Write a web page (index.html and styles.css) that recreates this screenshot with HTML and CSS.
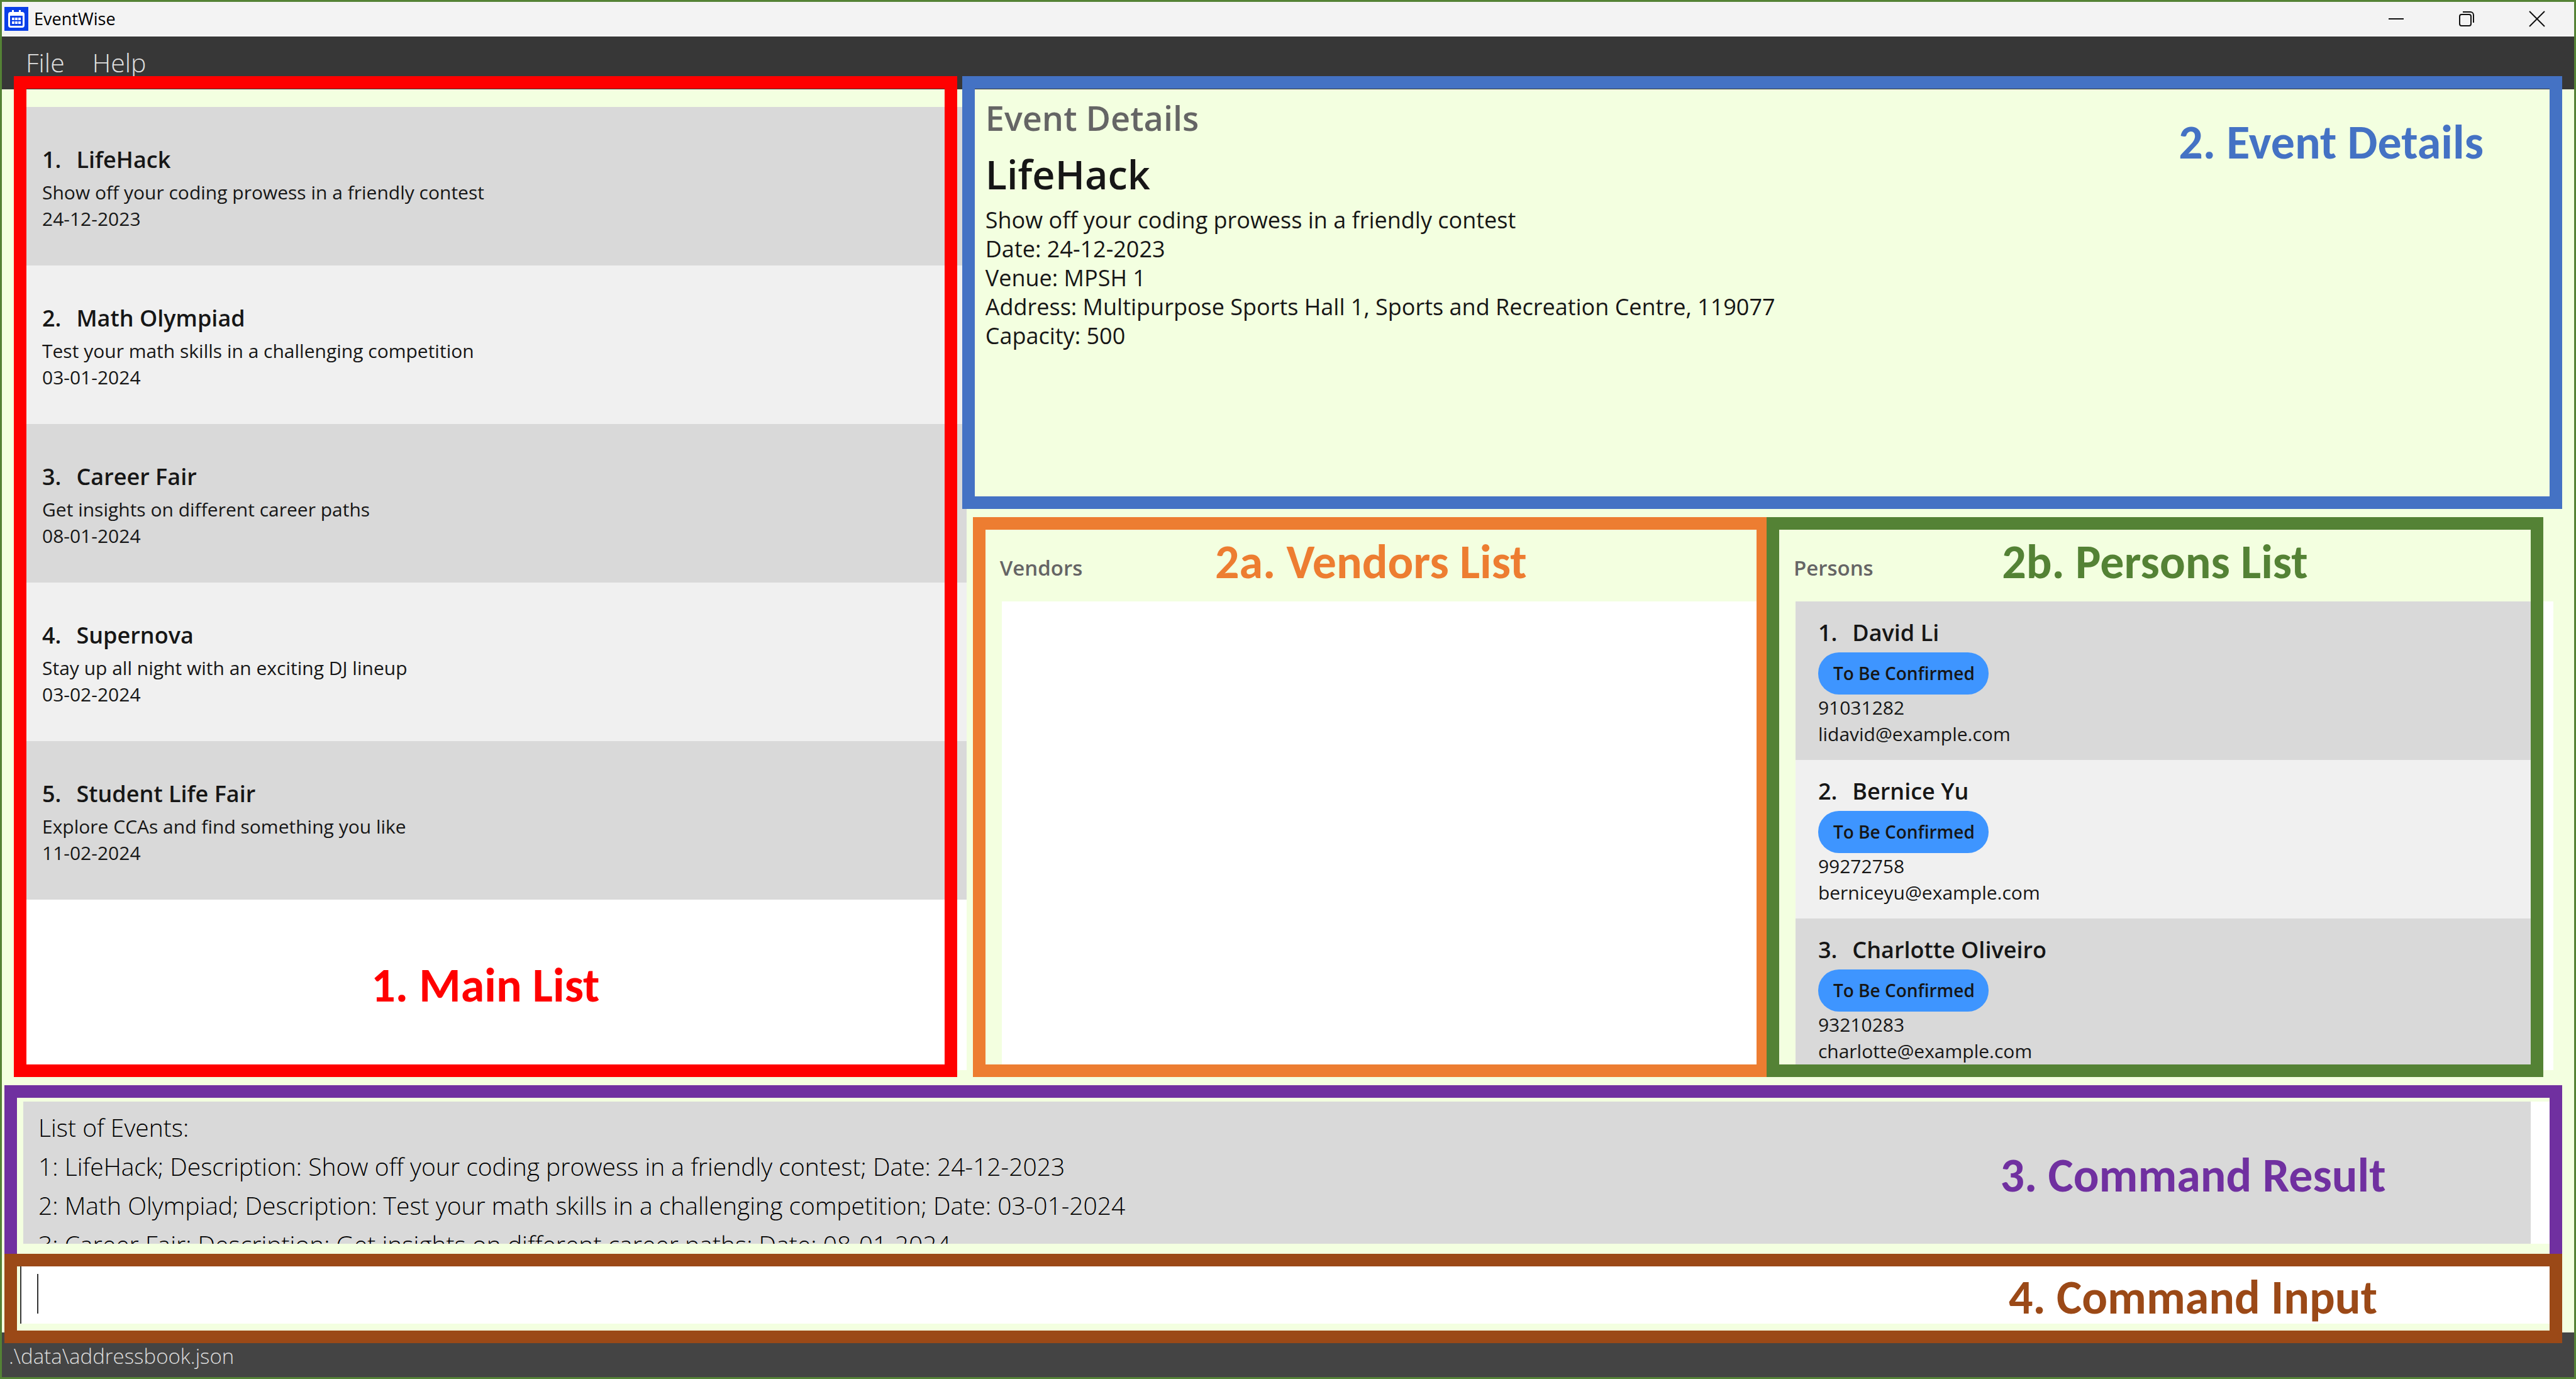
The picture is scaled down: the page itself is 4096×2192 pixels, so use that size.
FILE: index.html
```html
<!DOCTYPE html>
<html lang="en">
<head>
<meta charset="utf-8">
<title>EventWise</title>
<link rel="stylesheet" href="styles.css">
</head>
<body>
<div class="window">
  <header class="titlebar">
    <svg class="app-icon" viewBox="0 0 38 38" aria-hidden="true">
      <rect width="38" height="38" fill="#0a3fe8"/>
      <path fill="#fff" d="M12 5h3v3h8V5h3v3h2a4 4 0 0 1 4 4v17a4 4 0 0 1-4 4H10a4 4 0 0 1-4-4V12a4 4 0 0 1 4-4h2z"/>
      <path fill="#0a3fe8" d="M9 14h20v15a1 1 0 0 1-1 1H10a1 1 0 0 1-1-1z"/>
      <path fill="#fff" d="M12 17h4v4h-4zM17 17h4v4h-4zM22 17h4v4h-4zM12 23h4v4h-4zM17 23h4v4h-4zM22 23h4v4h-4z"/>
    </svg>
    <span class="app-name">EventWise</span>
    <div class="window-buttons">
      <button class="window-button" type="button" aria-label="Minimize">
        <svg viewBox="0 0 24 24"><path d="M0 12h24"/></svg>
      </button>
      <button class="window-button" type="button" aria-label="Restore">
        <svg viewBox="0 0 24 24"><rect x="1" y="5" width="18" height="18" rx="3"/><path d="M6 1h12a5 5 0 0 1 5 5v12"/></svg>
      </button>
      <button class="window-button" type="button" aria-label="Close">
        <svg viewBox="0 0 24 24"><path d="M0 0l24 24M24 0L0 24"/></svg>
      </button>
    </div>
  </header>

  <nav class="menubar">
    <button class="menu" type="button">File</button>
    <button class="menu" type="button">Help</button>
  </nav>

  <main class="workspace">
    <section class="events">
      <ol class="list event-list">
        <li class="event">
          <h2 class="item-name"><span>1.</span><span>LifeHack</span></h2>
          <p class="item-line">Show off your coding prowess in a friendly contest</p>
          <p class="item-line">24-12-2023</p>
        </li>
        <li class="event">
          <h2 class="item-name"><span>2.</span><span>Math Olympiad</span></h2>
          <p class="item-line">Test your math skills in a challenging competition</p>
          <p class="item-line">03-01-2024</p>
        </li>
        <li class="event">
          <h2 class="item-name"><span>3.</span><span>Career Fair</span></h2>
          <p class="item-line">Get insights on different career paths</p>
          <p class="item-line">08-01-2024</p>
        </li>
        <li class="event">
          <h2 class="item-name"><span>4.</span><span>Supernova</span></h2>
          <p class="item-line">Stay up all night with an exciting DJ lineup</p>
          <p class="item-line">03-02-2024</p>
        </li>
        <li class="event">
          <h2 class="item-name"><span>5.</span><span>Student Life Fair</span></h2>
          <p class="item-line">Explore CCAs and find something you like</p>
          <p class="item-line">11-02-2024</p>
        </li>
      </ol>
      <div class="frame frame-events"><span class="callout">1. Main List</span></div>
    </section>

    <div class="event-side">
      <section class="details">
        <h1 class="details-heading">Event Details</h1>
        <h2 class="details-name">LifeHack</h2>
        <p class="details-line">Show off your coding prowess in a friendly contest</p>
        <p class="details-line">Date: 24-12-2023</p>
        <p class="details-line">Venue: MPSH 1</p>
        <p class="details-line">Address: Multipurpose Sports Hall 1, Sports and Recreation Centre, 119077</p>
        <p class="details-line">Capacity: 500</p>
        <div class="frame frame-details"><span class="callout">2. Event Details</span></div>
      </section>

      <div class="sublists">
        <section class="sublist">
          <h2 class="sublist-heading">Vendors</h2>
          <ol class="list"></ol>
          <div class="frame frame-vendors"><span class="callout">2a. Vendors List</span></div>
        </section>
        <section class="sublist">
          <h2 class="sublist-heading">Persons</h2>
          <ol class="list person-list">
            <li class="person">
              <h3 class="item-name"><span>1.</span><span>David Li</span></h3>
              <span class="status-pill">To Be Confirmed</span>
              <p class="item-line">91031282</p>
              <p class="item-line">lidavid@example.com</p>
            </li>
            <li class="person">
              <h3 class="item-name"><span>2.</span><span>Bernice Yu</span></h3>
              <span class="status-pill">To Be Confirmed</span>
              <p class="item-line">99272758</p>
              <p class="item-line">berniceyu@example.com</p>
            </li>
            <li class="person">
              <h3 class="item-name"><span>3.</span><span>Charlotte Oliveiro</span></h3>
              <span class="status-pill">To Be Confirmed</span>
              <p class="item-line">93210283</p>
              <p class="item-line">charlotte@example.com</p>
            </li>
          </ol>
          <div class="frame frame-persons"><span class="callout">2b. Persons List</span></div>
        </section>
      </div>
    </div>
  </main>

  <section class="result">
    <div class="result-box">
      <textarea class="result-text" readonly aria-label="Command result">List of Events:
1: LifeHack; Description: Show off your coding prowess in a friendly contest; Date: 24-12-2023
2: Math Olympiad; Description: Test your math skills in a challenging competition; Date: 03-01-2024
3: Career Fair; Description: Get insights on different career paths; Date: 08-01-2024</textarea>
    </div>
    <div class="frame frame-result"><span class="callout">3. Command Result</span></div>
  </section>

  <section class="command">
    <input class="command-input" type="text" aria-label="Command input">
    <span class="caret"></span>
    <div class="frame frame-command"><span class="callout">4. Command Input</span></div>
  </section>

  <footer class="statusbar">.\data\addressbook.json</footer>
</div>
</body>
</html>
```
FILE: styles.css
```css
* {
  box-sizing: border-box;
}

body {
  margin: 0;
  color: #161616;
  font-family: "Segoe UI", "Open Sans", "Noto Sans", sans-serif;
  font-variant-ligatures: none;
}

h1, h2, h3, p, ol {
  margin: 0;
  padding: 0;
}

ol {
  list-style: none;
}

button {
  margin: 0;
  padding: 0;
  border: 0;
  background: none;
  color: inherit;
  font: inherit;
}

.window {
  display: flex;
  flex-direction: column;
  min-height: 100vh;
  border: 3px solid #548235;
  background: #f3ffe0;
}

/* Title bar */

.titlebar {
  display: flex;
  align-items: center;
  height: 55px;
  padding: 0 3px 0 4px;
  border-bottom: 2px solid #fdfdfd;
  background: #f3f3f3;
  color: #000;
}

.app-icon {
  width: 38px;
  height: 38px;
}

.app-name {
  margin-left: 9px;
  font-size: 27px;
}

.window-buttons {
  display: flex;
  height: 100%;
  margin-left: auto;
}

.window-button {
  display: grid;
  place-items: center;
  width: 112px;
}

.window-button svg {
  width: 24px;
  height: 24px;
  overflow: visible;
  fill: none;
  stroke: #111;
  stroke-width: 2;
}

/* Menu bar */

.menubar {
  display: flex;
  height: 84px;
  padding-left: 16px;
  background: #373737;
}

.menu {
  align-self: flex-start;
  padding: 0 22px;
  color: #e0e0e0;
  font-size: 41px;
  font-weight: 300;
  line-height: 82px;
}

/* Workspace */

.workspace {
  display: grid;
  flex: 1;
  grid-template-columns: 3fr 5fr;
}

.events {
  position: relative;
  display: flex;
  padding: 28px 0 11px 29px;
}

.list {
  flex: 1;
  overflow: hidden;
  background: #fff;
}

.event,
.person {
  height: 252px;
  background: #d9d9d9;
}

.event:nth-child(even),
.person:nth-child(even) {
  background: #f0f0f0;
}

.event {
  padding: 59px 35px 0;
}

.person {
  padding: 25px 36px 0;
}

.item-name {
  display: flex;
  gap: 24px;
  font-size: 36px;
  font-weight: 600;
  line-height: 50px;
}

.event .item-name {
  margin-bottom: 6px;
}

.item-line {
  font-size: 30px;
  line-height: 42px;
}

.event-side {
  display: grid;
  grid-template-rows: 3fr 4fr;
  gap: 13px;
}

.details {
  position: relative;
  padding: 5px 30px;
}

.details-heading {
  margin-bottom: 5px;
  color: #656565;
  font-size: 54px;
  font-weight: 600;
  line-height: 80px;
}

.details-name {
  margin-bottom: 5px;
  font-size: 63px;
  font-weight: 600;
  line-height: 90px;
}

.details-line {
  font-size: 36px;
  line-height: 46px;
}

.sublists {
  display: grid;
  grid-template-columns: 1fr 1fr;
  min-height: 0;
  padding: 0 22px 0 10px;
}

.sublist {
  position: relative;
  display: flex;
  flex-direction: column;
  min-height: 0;
  padding: 56px 11px 11px 43px;
}

.sublist-heading {
  margin-bottom: 28px;
  color: #656565;
  font-size: 33px;
  font-weight: 600;
  line-height: 50px;
}

.sublist .list {
  min-height: 0;
  margin-left: 3px;
  flex-basis: 0;
}

.person-list {
  padding-right: 36px;
}

.status-pill {
  display: block;
  width: max-content;
  margin-top: 6px;
  padding: 0 22px 0 24px;
  border-radius: 33px;
  background: #3e95ff;
  font-size: 28px;
  font-weight: 600;
  line-height: 67px;
}

/* Command result */

.result {
  position: relative;
  margin: 13px 19px 0 4px;
  padding: 26px 14px 16px 30px;
}

.result-box {
  padding-right: 36px;
  background: #fff;
}

.result-text {
  display: block;
  width: 100%;
  height: 226px;
  padding: 10px 24px 0;
  border: 0;
  outline: 0;
  overflow: hidden;
  resize: none;
  background: #d9d9d9;
  color: #000;
  font-family: inherit;
  font-size: 39px;
  font-weight: 300;
  line-height: 62px;
}

/* Command input */

.command {
  position: relative;
  z-index: 1;
  height: 142px;
  margin: 0 19px 0 4px;
  padding: 3px 14px 31px 25px;
}

.command-input {
  display: block;
  width: 100%;
  height: 108px;
  padding: 0 26px;
  border: 0;
  border-left: 2px solid #383838;
  outline: 0;
  background: #fff;
  font-family: inherit;
  font-size: 39px;
  font-weight: 300;
}

.caret {
  position: absolute;
  top: 32px;
  left: 52px;
  width: 2px;
  height: 63px;
  background: #333;
}

/* Status bar */

.statusbar {
  height: 71px;
  margin-top: -17px;
  padding: 4px 11px 0;
  background: #444;
  color: #dcdcdc;
  font-size: 33px;
  font-weight: 300;
  line-height: 67px;
}

/* Callout frames laid over the panels */

.frame {
  position: absolute;
  inset: 0;
  z-index: 2;
  border: 20px solid;
  pointer-events: none;
}

.callout {
  position: absolute;
  font-family: Calibri, Carlito, Lato, sans-serif;
  font-size: 76px;
  font-weight: 700;
  line-height: 80px;
  white-space: nowrap;
}

.frame-events {
  inset: -21px 15px 0 19px;
  border-color: #f00;
  color: #f00;
}

.frame-events .callout {
  right: 0;
  bottom: 86px;
  left: 0;
  text-align: center;
}

.frame-details {
  inset: -21px 19px 0 -7px;
  border-color: #4472c4;
  color: #4472c4;
}

.frame-details .callout {
  top: 45px;
  right: 105px;
}

.frame-vendors {
  right: -4px;
  border-color: #ed7d31;
  color: #ed7d31;
}

.frame-persons {
  right: 27px;
  border-color: #548235;
  color: #548235;
}

.frame-vendors .callout,
.frame-persons .callout {
  top: 11px;
  right: 0;
  left: 0;
  text-align: center;
}

.frame-result {
  border-bottom: 0;
  border-color: #7030a0;
  color: #7030a0;
}

.frame-command {
  border-color: #9b4917;
  color: #9b4917;
}

.frame-result .callout,
.frame-command .callout {
  right: 240px;
  width: 654px;
  text-align: center;
}

.frame-result .callout {
  top: 83px;
}

.frame-command .callout {
  top: 9px;
}
```
